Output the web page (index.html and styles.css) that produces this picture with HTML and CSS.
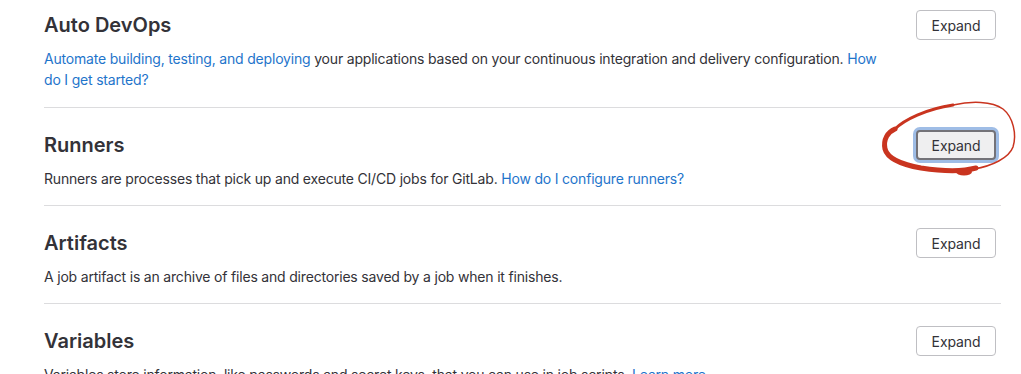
FILE: index.html
```html
<!DOCTYPE html>
<html lang="en">
  <head>
    <meta charset="UTF-8" />
    <meta name="viewport" content="width=device-width, initial-scale=1.0" />
    <title>CI/CD Settings</title>
    <link rel="stylesheet" href="styles.css">
  </head>
  <body>
    <div class="settings">
      <section class="block first">
        <div class="block-head">
          <h4 class="block-title">Auto DevOps</h4>
          <button class="btn">Expand</button>
        </div>
        <p class="block-desc">
          <a href="#">Automate building, testing, and deploying</a> your applications based on your continuous integration and delivery configuration. <a href="#">How do I get started?</a>
        </p>
      </section>

      <section class="block">
        <div class="block-head">
          <h4 class="block-title">Runners</h4>
          <div class="annotated">
            <button class="btn focused">Expand</button>
            <!-- hand drawn red circle -->
            <svg class="scribble" width="145" height="85" viewBox="0 0 145 85">
              <path d="M77 11 C95 7, 116 7, 127 15 C137 23, 141 40, 137 53 C133 64, 116 72, 98 75"
                    fill="none" stroke="#c9341f" stroke-width="1.5" stroke-linecap="round" />
              <path d="M19 35 C28 26, 50 15, 77 11"
                    fill="none" stroke="#c9341f" stroke-width="3" stroke-linecap="round" />
              <path d="M100 74 C85 78, 65 77, 45 74 C28 71, 12 66, 9 55 C7 45, 12 38, 19 35"
                    fill="none" stroke="#c9341f" stroke-width="5" stroke-linecap="round" />
              <ellipse cx="88" cy="78" rx="8" ry="3.5" fill="#c9341f" />
            </svg>
          </div>
        </div>
        <p class="block-desc">
          Runners are processes that pick up and execute CI/CD jobs for GitLab. <a href="#">How do I configure runners?</a>
        </p>
      </section>

      <section class="block">
        <div class="block-head">
          <h4 class="block-title">Artifacts</h4>
          <button class="btn">Expand</button>
        </div>
        <p class="block-desc">
          A job artifact is an archive of files and directories saved by a job when it finishes.
        </p>
      </section>

      <section class="block">
        <div class="block-head">
          <h4 class="block-title">Variables</h4>
          <button class="btn">Expand</button>
        </div>
        <p class="block-desc">
          Variables store information, like passwords and secret keys, that you can use in job scripts. <a href="#">Learn more.</a>
        </p>
      </section>
    </div>
  </body>
</html>
```

FILE: styles.css
```css
body {
  font-family: Inter, "Noto Sans", sans-serif;
  margin: 0;
  background-color: #fff;
  color: #333238;
  height: 374px;
  overflow: hidden;
}

.settings {
  width: 957px;
  margin-left: 44px;
}

.block {
  padding: 22px 0 16px;
  border-bottom: 1px solid #dcdcde;
}

.block.first {
  padding-top: 10px;
  padding-bottom: 17px;
}

.block-head {
  display: flex;
  justify-content: space-between;
  align-items: center;
  padding-right: 5px;
}

.block-title {
  margin: 0;
  font-size: 20px;
  font-weight: 600;
  line-height: 30px;
  color: #333238;
}

.block-desc {
  margin: 8px 0 0;
  max-width: 845px;
  font-size: 14px;
  line-height: 21px;
  letter-spacing: -0.19px;
}

.block-desc a {
  color: #1f75cb;
  text-decoration: none;
}

.btn {
  font-family: inherit;
  font-size: 14px;
  letter-spacing: -0.1px;
  color: #333238;
  background-color: #fff;
  border: 1px solid #bfbfc3;
  border-radius: 4px;
  width: 80px;
  height: 30px;
  padding: 0;
  cursor: pointer;
}

.btn.focused {
  background-color: #efeff0;
  border: 2px solid #737278;
  box-shadow: 0 0 0 3px #9fbde6;
}

.annotated {
  position: relative;
}

.scribble {
  position: absolute;
  left: -40px;
  top: -36px;
  pointer-events: none;
}
```
